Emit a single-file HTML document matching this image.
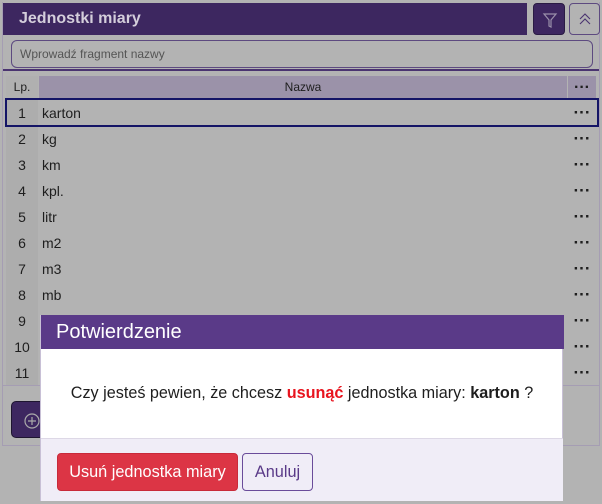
<!DOCTYPE html>
<html><head><meta charset="utf-8"><style>
*{box-sizing:border-box;margin:0;padding:0}
body{width:602px;height:504px;background:#b3b3b3;font-family:"Liberation Sans",sans-serif;position:relative;overflow:hidden;font-size:14px;color:#1e1e1e}
.abs{position:absolute}
.panel{left:2px;top:2px;width:598px;height:444px;border:1px solid #a59db3;border-top:none}
.hdr{left:3px;top:3px;width:524px;height:32px;background:#3d2760;color:#d4cedb;font-weight:bold;font-size:16px;line-height:32px;padding-left:16px}
.fbtn{left:533px;top:3px;width:32px;height:32px;background:#3d2760;border:1px solid #2a1b44;border-radius:4px}
.cbtn{left:569px;top:3px;width:31px;height:32px;border:1px solid #5d4a80;border-radius:4px}
.inp{left:11px;top:40px;width:582px;height:28px;border:1px solid #5d4a80;border-radius:6px;font-size:12px;color:#555;line-height:26px;padding-left:8px}
.line{left:3px;top:69px;width:596px;height:2px;background:#4a3470}
.th{top:76px;height:23px;background:#9b92a9;font-size:12px;line-height:23px;text-align:center}
.lpc{left:6px;top:99px;width:32px;height:286px;background:#adadad}
.row{left:6px;width:590px;height:26px;line-height:26px;font-size:14px}
.row .n{position:absolute;left:0;width:32px;text-align:center}
.row .t{position:absolute;left:36px}
.row .d{position:absolute;left:562px;width:28px;text-align:center;font-weight:bold;font-size:17px}
.sel{left:5px;top:98px;width:594px;height:29px;border:2px solid #141466}
.sep{left:3px;top:385px;width:596px;height:1px;background:#a59db3}
.add{left:11px;top:401px;width:40px;height:37px;background:#3d2760;border:1px solid #1e1530;border-radius:5px}
.dlg{left:40px;top:315px;width:523px;height:186px;background:#fff;border:1px solid #c8c0d6;border-top:none}
.dh{left:0;top:0;width:523px;height:34px;background:#5a3a88;color:#fff;font-size:20px;line-height:34px;padding-left:15px}
.db{left:0;top:34px;width:522px;height:89px;text-align:center;font-size:16.2px;line-height:89px}
.df{left:0;top:123px;width:522px;height:63px;background:#f0edf7;border-top:1px solid #ddd8e6}
.b1{left:16px;top:14px;width:181px;height:38px;background:#dc3545;border:1px solid #c82a3a;border-radius:4px;color:#fff;font-size:16.3px;line-height:36px;text-align:center}
.b2{left:201px;top:14px;width:71px;height:38px;border:1px solid #6a4c9a;border-radius:4px;color:#5a3a88;font-size:16.3px;line-height:36px;text-align:center}
</style></head><body>
<div class="abs panel"></div>
<div class="abs hdr">Jednostki miary</div>
<div class="abs fbtn"><svg width="32" height="32" viewBox="0 0 32 32"><path d="M10 10h12l-5 6v7l-2-1v-6z" fill="none" stroke="#9a90aa" stroke-width="1.2"/></svg></div>
<div class="abs cbtn"><svg width="30" height="30" viewBox="0 0 30 30"><path d="M10 15l5-5 5 5M10 20l5-5 5 5" fill="none" stroke="#4a3470" stroke-width="1.1"/></svg></div>
<div class="abs inp">Wprowadź fragment nazwy</div>
<div class="abs line"></div>
<div class="abs th" style="left:6px;width:32px;background:#b0b0b0">Lp.</div>
<div class="abs th" style="left:39px;width:528px">Nazwa</div>
<div class="abs th" style="left:568px;width:28px;font-weight:bold;font-size:16px">···</div>
<div class="abs lpc"></div>
<div class="abs row" style="top:100px"><span class="n">1</span><span class="t">karton</span><span class="d">···</span></div>
<div class="abs row" style="top:126px"><span class="n">2</span><span class="t">kg</span><span class="d">···</span></div>
<div class="abs row" style="top:152px"><span class="n">3</span><span class="t">km</span><span class="d">···</span></div>
<div class="abs row" style="top:178px"><span class="n">4</span><span class="t">kpl.</span><span class="d">···</span></div>
<div class="abs row" style="top:204px"><span class="n">5</span><span class="t">litr</span><span class="d">···</span></div>
<div class="abs row" style="top:230px"><span class="n">6</span><span class="t">m2</span><span class="d">···</span></div>
<div class="abs row" style="top:256px"><span class="n">7</span><span class="t">m3</span><span class="d">···</span></div>
<div class="abs row" style="top:282px"><span class="n">8</span><span class="t">mb</span><span class="d">···</span></div>
<div class="abs row" style="top:308px"><span class="n">9</span><span class="d">···</span></div>
<div class="abs row" style="top:334px"><span class="n">10</span><span class="d">···</span></div>
<div class="abs row" style="top:360px"><span class="n">11</span><span class="d">···</span></div>
<div class="abs sel"></div>
<div class="abs sep"></div>
<div class="abs add"><svg width="38" height="36" viewBox="0 0 38 36"><circle cx="20" cy="19" r="7" fill="none" stroke="#aaa" stroke-width="1.2"/><path d="M20 15v8M16 19h8" stroke="#aaa" stroke-width="1.2"/></svg></div>
<div class="abs dlg">
<div class="abs dh">Potwierdzenie</div>
<div class="abs db">Czy jesteś pewien, że chcesz <b style="color:#e8141e">usunąć</b> jednostka miary: <b>karton</b> ?</div>
<div class="abs df"><div class="abs b1">Usuń jednostka miary</div><div class="abs b2">Anuluj</div></div>
</div>
</body></html>
